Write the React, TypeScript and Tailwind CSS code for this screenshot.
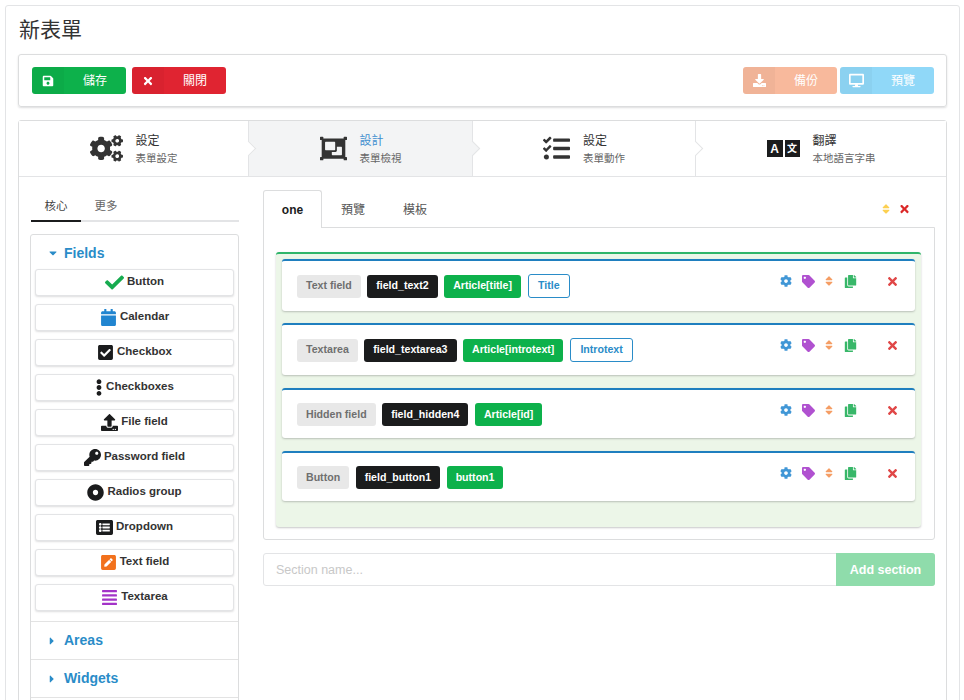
import React from "react";
import {
  FaSave,
  FaTimes,
  FaDownload,
  FaDesktop,
  FaCogs,
  FaObjectGroup,
  FaTasks,
  FaCheck,
  FaCalendar,
  FaCheckSquare,
  FaEllipsisV,
  FaUpload,
  FaKey,
  FaDotCircle,
  FaListAlt,
  FaPenSquare,
  FaAlignJustify,
  FaCaretDown,
  FaCaretRight,
  FaCog,
  FaTag,
  FaSort,
  FaCopy,
} from "react-icons/fa";

const fieldTypes = [
  { label: "Button", icon: <FaCheck className="text-[19px] text-[#16ab4f]" /> },
  { label: "Calendar", icon: <FaCalendar className="text-[17px] text-[#2185d0]" /> },
  { label: "Checkbox", icon: <FaCheckSquare className="text-[17px] text-[#1b1c1d]" /> },
  { label: "Checkboxes", icon: <FaEllipsisV className="w-[8px] text-[17px] text-[#1b1c1d]" /> },
  { label: "File field", icon: <FaUpload className="text-[17px] text-[#1b1c1d]" /> },
  { label: "Password field", icon: <FaKey className="text-[17px] text-[#1b1c1d]" /> },
  { label: "Radios group", icon: <FaDotCircle className="text-[17px] text-[#1b1c1d]" /> },
  { label: "Dropdown", icon: <FaListAlt className="text-[17px] text-[#1b1c1d]" /> },
  { label: "Text field", icon: <FaPenSquare className="text-[17px] text-[#f2711c]" /> },
  { label: "Textarea", icon: <FaAlignJustify className="text-[17px] text-[#a333c8]" /> },
];

const LanguageIcon = () => (
  <div className="flex w-[33px] justify-between text-white">
    <span className="flex h-[17px] w-[16px] items-center justify-center bg-[#1b1c1d] text-[12px] font-bold">A</span>
    <span className="flex h-[17px] w-[15px] items-center justify-center bg-[#1b1c1d] text-[10px] font-bold">文</span>
  </div>
);

const steps = [
  { title: "設定", sub: "表單設定", icon: <FaCogs className="text-[33px]" />, width: "w-[229px]", active: false, arrow: false },
  { title: "設計", sub: "表單檢視", icon: <FaObjectGroup className="text-[27px]" />, width: "w-[224px]", active: true, arrow: true },
  { title: "設定", sub: "表單動作", icon: <FaTasks className="text-[27px]" />, width: "w-[223px]", active: false, arrow: true },
  { title: "翻譯", sub: "本地語言字串", icon: <LanguageIcon />, width: "w-[251px]", active: false, arrow: true },
];

const fieldCards = [
  { type: "Text field", name: "field_text2", model: "Article[title]", title: "Title", height: "h-[52px]", mb: "mb-[12px]" },
  { type: "Textarea", name: "field_textarea3", model: "Article[introtext]", title: "Introtext", height: "h-[52px]", mb: "mb-[13px]" },
  { type: "Hidden field", name: "field_hidden4", model: "Article[id]", title: "", height: "h-[50px]", mb: "mb-[13px]" },
  { type: "Button", name: "field_button1", model: "button1", title: "", height: "h-[50px]", mb: "" },
];

const ActionButton = ({ icon, label, color }: { icon: React.ReactNode; label: string; color: string }) => (
  <div className={`flex h-[27px] w-[94px] items-center rounded-[3px] text-[12px] text-white ${color}`}>
    <span className="flex h-[27px] w-[32px] items-center justify-center rounded-l-[3px] bg-black/[0.03]">{icon}</span>
    <span className="flex-1 text-center">{label}</span>
  </div>
);

const FieldCard = ({ card }: { card: (typeof fieldCards)[number] }) => (
  <div className={`flex items-start rounded-[3px] border-t-2 border-[#1f7fbf] bg-white pt-[13px] pr-[17px] pl-[15px] shadow-[0_1px_2px_rgba(34,36,38,0.25)] ${card.height} ${card.mb}`}>
    <div className="flex items-center gap-[6.5px] text-[10.6px] font-bold">
      <span className="flex h-[23px] items-center rounded-[3px] bg-[#e8e8e8] px-[9px] text-[#6f6f6f]">{card.type}</span>
      <span className="flex h-[23px] items-center rounded-[3px] bg-[#1b1c1d] px-[9px] text-white">{card.name}</span>
      <span className="flex h-[23px] items-center rounded-[3px] bg-[#0db14b] px-[9px] text-white">{card.model}</span>
      {card.title && (
        <span className="flex h-[24px] items-center rounded-[3px] border border-[#2a8cc8] px-[9.5px] text-[#2a8cc8]">{card.title}</span>
      )}
    </div>
    <div className="ml-auto flex h-[14px] items-center opacity-85">
      <FaCog className="w-[12px] text-[12px] text-[#2185d0]" />
      <FaTag className="ml-[10px] w-[13px] text-[13px] text-[#a333c8]" />
      <FaSort className="ml-[10px] w-[8px] text-[12px] text-[#f2711c] opacity-80" />
      <FaCopy className="ml-[11px] w-[13px] text-[13px] text-[#16ab4f]" />
      <FaTimes className="ml-[30px] w-[11px] text-[13px] text-[#db2828]" />
    </div>
  </div>
);

const AccordionTitle = ({ label }: { label: string }) => (
  <div className="flex h-[38px] items-center border-t border-[#e3e3e3] pl-[17px] text-[14px] font-bold text-[#2a8cc8]">
    <FaCaretRight className="w-[8px] text-[12px]" />
    <span className="ml-[8px]">{label}</span>
  </div>
);

export default function App() {
  return (
    <div className="h-[700px] overflow-hidden bg-white pt-[5px] pr-[4px] pl-[5px] font-['Liberation_Sans','Noto_Sans_CJK_TC',sans-serif] text-[#333]">
      <div className="h-[760px] rounded-[3px] border border-[#e3e4e6] px-[12px]">
        <h1 className="mt-[10px] pl-px text-[21px] leading-[28px] font-normal text-[#333]">新表單</h1>

        <div className="mt-[10px] flex h-[53px] items-center justify-between rounded-[3px] border border-[#dcddde] pr-[12px] pl-[13px] shadow-[0_1px_2px_rgba(34,36,38,0.15)]">
          <div className="flex gap-[6px]">
            <ActionButton icon={<FaSave />} label="儲存" color="bg-[#0db14b]" />
            <ActionButton icon={<FaTimes />} label="關閉" color="bg-[#e02431]" />
          </div>
          <div className="flex gap-[3px]">
            <ActionButton icon={<FaDownload className="text-[13px]" />} label="備份" color="bg-[#f8b99c]" />
            <ActionButton icon={<FaDesktop className="text-[15px]" />} label="預覽" color="bg-[#90d8f8]" />
          </div>
        </div>

        <div className="mt-[13px] rounded-[3px] border border-[#dcddde]">
          <div className="flex h-[56px] border-b border-[#e3e4e6]">
            {steps.map((step, i) => (
              <div
                key={i}
                className={`relative flex items-center justify-center gap-[13px] ${step.width} ${step.active ? "bg-[#f3f4f5]" : "bg-white"} ${step.arrow ? "border-l border-[#e3e4e6]" : ""}`}
              >
                {step.icon}
                <div>
                  <div className={`text-[12px] leading-[16px] ${step.active ? "text-[#3f8fcf]" : "text-[#333]"}`}>{step.title}</div>
                  <div className="mt-[2px] text-[10.5px] leading-[14px] text-[#666]">{step.sub}</div>
                </div>
                {i < 3 && (
                  <div className={`absolute top-[22px] -right-[6px] z-10 h-[11px] w-[11px] rotate-45 border-t border-r border-[#e3e4e6] ${step.active ? "bg-[#f3f4f5]" : "bg-white"}`} />
                )}
              </div>
            ))}
          </div>

          <div className="flex pl-[12px]">
            <div className="w-[208px] shrink-0 pt-[19px]">
              <div className="flex h-[26px] border-b-2 border-[#e3e4e6] text-[11.5px] text-[#444]">
                <div className="-mb-[2px] h-[26px] w-[50px] border-b-2 border-[#1b1c1d] pt-[2px] text-center">核心</div>
                <div className="w-[50px] pt-[2px] text-center text-[#666]">更多</div>
              </div>
              <div className="mt-[12px] -ml-px rounded-t-[3px] border border-[#dcddde]">
                <div className="flex h-[34px] items-center pt-[2px] pl-[17px] text-[14px] font-bold text-[#2a8cc8]">
                  <FaCaretDown className="w-[10px] text-[12px]" />
                  <span className="ml-[6px]">Fields</span>
                </div>
                <div className="flex flex-col gap-[8px] px-[4px] pb-[10px]">
                  {fieldTypes.map((f) => (
                    <div
                      key={f.label}
                      className="flex h-[27px] items-center justify-center gap-[3px] rounded-[3px] border border-[#e3e4e6] bg-white pb-px text-[11.5px] font-bold text-[#333] shadow-[0_1px_2px_rgba(34,36,38,0.15)]"
                    >
                      {f.icon}
                      <span>{f.label}</span>
                    </div>
                  ))}
                </div>
                <AccordionTitle label="Areas" />
                <AccordionTitle label="Widgets" />
                <div className="h-[10px] border-t border-[#e3e3e3]" />
              </div>
            </div>

            <div className="ml-[24px] w-[672px] pt-[13px]">
              <div className="relative z-10 flex h-[38px] items-center text-[12px] text-[#555]">
                <div className="flex h-[38px] w-[59px] items-center justify-center rounded-t-[3px] border border-b-0 border-[#dcddde] bg-white font-bold text-[#1b1c1d]">one</div>
                <div className="w-[62px] pt-px text-center">預覽</div>
                <div className="w-[62px] pt-px text-center">模板</div>
                <div className="ml-auto flex items-center gap-[9px] pr-[25px]">
                  <FaSort className="w-[8px] text-[#fbbd08] opacity-70" />
                  <FaTimes className="w-[11px] text-[#db2828]" />
                </div>
              </div>
              <div className="-mt-px rounded-b-[3px] border border-[#dcddde] pt-[24px] pr-[13px] pb-[12px] pl-[12px]">
                <div className="rounded-[3px] border-t-2 border-[#2fb56a] bg-[#ecf6e8] px-[6px] pt-[5px] pb-[26px] shadow-[0_1px_2px_rgba(34,36,38,0.25)]">
                  {fieldCards.map((card) => (
                    <FieldCard key={card.name} card={card} />
                  ))}
                </div>
              </div>

              <div className="mt-[13px] flex h-[33px] rounded-[3px] border border-[#e3e4e6]">
                <div className="flex flex-1 items-center pt-px pl-[12px] text-[12.5px] text-[#c8c8c8]">Section name...</div>
                <div className="-my-px -mr-px flex h-[33px] w-[99px] items-center justify-center rounded-r-[3px] bg-[#8fdcab] pt-px text-[12.5px] font-bold text-white">Add section</div>
              </div>
            </div>
          </div>
        </div>
      </div>
    </div>
  );
}
